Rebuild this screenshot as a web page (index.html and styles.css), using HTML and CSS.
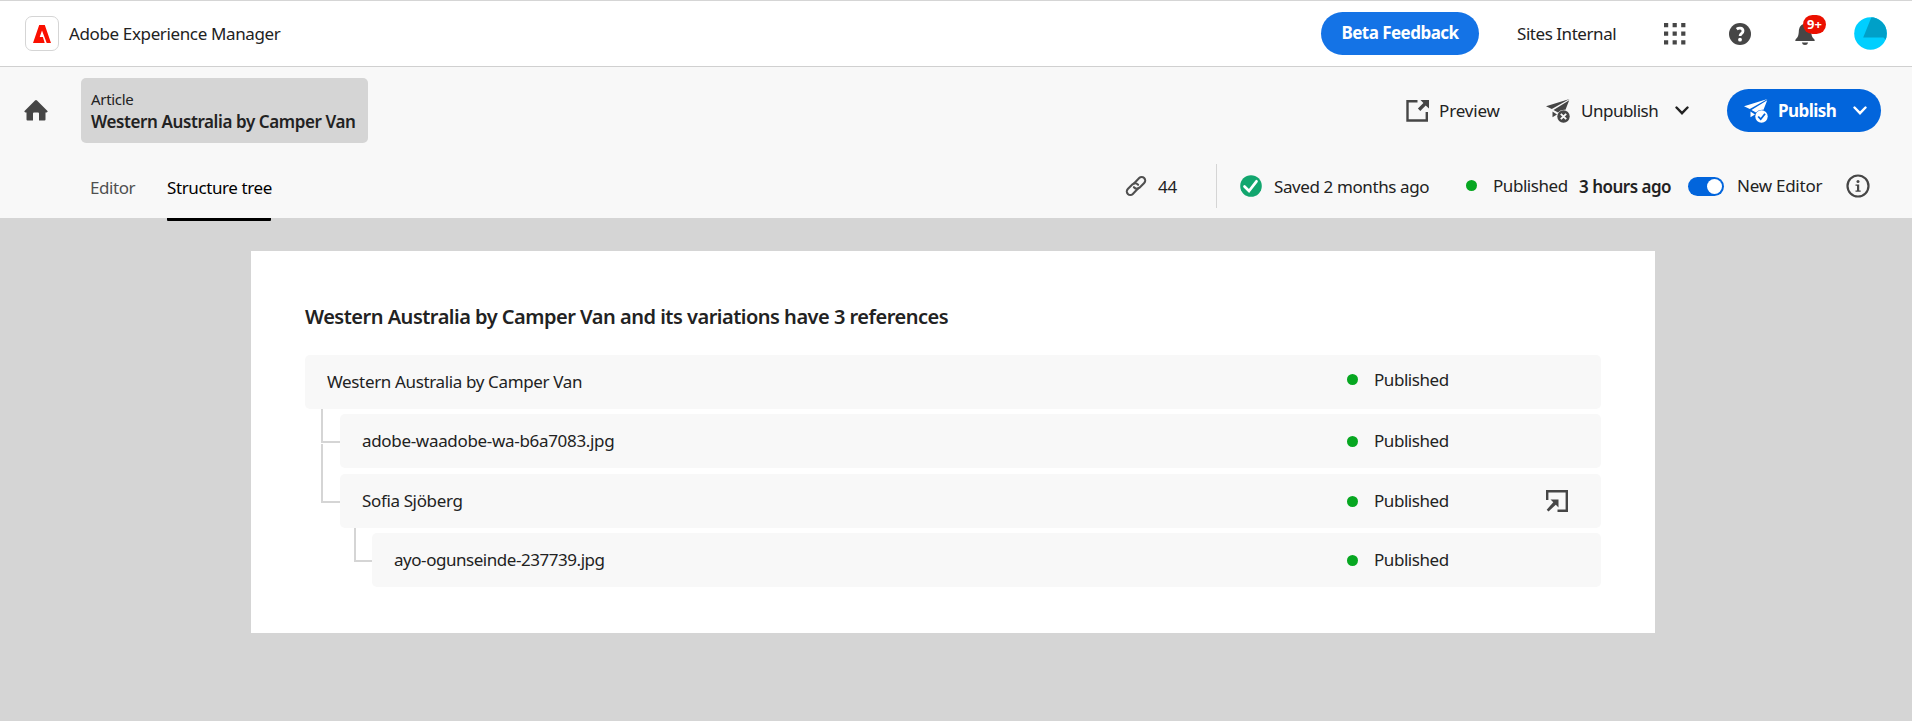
FILE: index.html
```html
<!DOCTYPE html>
<html lang="en">
<head>
<meta charset="utf-8">
<title>Adobe Experience Manager</title>
<link rel="stylesheet" href="styles.css">
</head>
<body>
<header class="shell">
  <div class="logo"><svg width="18" height="18" viewBox="0 0 18 18"><path fill="#fa0f00" d="M6.200 0h5.600L18 18h-4.300L9 5.600 6.700 12h3.200l1.800 6H0z"/></svg></div>
  <span class="t brand">Adobe Experience Manager</span>
  <button class="feedback"><span class="t">Beta Feedback</span></button>
  <span class="t org">Sites Internal</span>
  <svg class="apps" width="22" height="22" viewBox="0 0 22 22" fill="#464646"><path d="M0 0h4.200v4.200h-4.200zM8.600 0h4.200v4.200h-4.200zM17.200 0h4.200v4.200h-4.200zM0 8.600h4.200v4.200h-4.200zM8.600 8.600h4.200v4.200h-4.200zM17.200 8.600h4.200v4.200h-4.200zM0 17.200h4.200v4.200h-4.200zM8.600 17.200h4.200v4.200h-4.200zM17.200 17.200h4.200v4.200h-4.200z"/></svg>
  <svg class="help" width="22" height="22" viewBox="0 0 22 22"><circle cx="11" cy="11" r="11" fill="#464646"/><path d="M7.700 6.200Q9.200 5 11.200 5.100Q14 5.300 14 7.900Q14 9.400 12.500 10.500Q11.200 11.500 11.100 13" fill="none" stroke="#fff" stroke-width="2.800"/><circle cx="11" cy="16.700" r="1.900" fill="#fff"/></svg>
  <div class="bell"><svg width="20" height="22" viewBox="0 0 20 22" fill="#464646"><path d="M10 1C5.800 1 4 4.500 3.800 8.500C3.600 13 2.500 14.500.8 16.200Q0 17 .4 18H19.600Q20 17 19.200 16.200C17.500 14.500 16.400 13 16.200 8.500C16 4.500 14.200 1 10 1zM6.800 19.500H13.200Q12.500 22 10 22Q7.500 22 6.800 19.500z"/></svg><span class="badge">9+</span></div>
  <svg class="avatar" width="33" height="33" viewBox="0 0 33 33"><defs><clipPath id="disc"><circle cx="16.500" cy="16.500" r="16.300"/></clipPath></defs><g clip-path="url(#disc)"><path fill="#00cfff" d="M0 0h33v33H0z"/><path fill="#00a0c8" d="M17.500 0H33V24L29.500 20.500H9.200z"/></g></svg>
</header>
<section class="bar">
  <div class="actions">
    <svg class="home" width="24" height="21" viewBox="0 0 24 21"><path fill="#464646" d="M11 .4Q12 -.3 13 .4L23.500 11Q24 12.300 22.500 12.500H21.500V19.500Q21.500 20.500 20.500 20.500H15V13.500Q15 12.500 14 12.500H10Q9 12.500 9 13.500V20.500H3.500Q2.500 20.500 2.500 19.500V12.500H1.500Q0 12.300 .5 11z"/></svg>
    <div class="crumb"><span class="t kind">Article</span><span class="t name">Western Australia by Camper Van</span></div>
    <svg class="open" width="23" height="22" viewBox="0 0 23 22"><path d="M11.500 1.200H1.500V20.500H20.800V12" fill="none" stroke="#464646" stroke-width="2.400"/><path d="M14.500 0H23V8.500L19.700 5.500L14.300 11L11.900 8.600L17.400 3.100z" fill="#464646"/></svg>
    <span class="t preview">Preview</span>
    <svg class="plane un" width="24" height="24" viewBox="0 0 24 24"><path fill="#464646" d="M0 7.300L23.500 0L5.800 10zM7.500 11L23.200 1.200L19.500 10.800Q14.500 10.200 12 13.500zM6.500 12.500L11 15.500L6.500 18.300z"/><circle cx="17.500" cy="17.500" r="6.200" fill="#464646"/><path d="M14.800 14.800L20.200 20.200M20.200 14.800L14.800 20.200" stroke="#f8f8f8" stroke-width="1.900"/></svg>
    <span class="t unpublish">Unpublish</span>
    <svg class="chev" width="14" height="10" viewBox="0 0 14 10"><path d="M1.500 1.500L7 7.200L12.500 1.500" fill="none" stroke="#222" stroke-width="2.400" stroke-linecap="round"/></svg>
    <button class="publish">
      <svg width="24" height="24" viewBox="0 0 24 24"><path fill="#fff" d="M0 7.300L23.500 0L5.800 10zM7.500 11L23.200 1.200L19.500 10.800Q14.500 10.200 12 13.500zM6.500 12.500L11 15.500L6.500 18.300z"/><circle cx="17.500" cy="17.500" r="6.200" fill="#fff"/><path d="M14.200 17.500L16.700 20.200L21 14.800" fill="none" stroke="#0265dc" stroke-width="1.800"/></svg>
      <span class="t">Publish</span>
      <svg class="chev" width="14" height="10" viewBox="0 0 14 10"><path d="M1.500 1.500L7 7.200L12.500 1.500" fill="none" stroke="#fff" stroke-width="2.400" stroke-linecap="round"/></svg>
    </button>
  </div>
  <div class="status">
    <span class="t tab">Editor</span>
    <span class="tab-on"><span class="t">Structure tree</span></span>
    <svg class="link" width="22" height="22" viewBox="0 0 22 22" fill="none" stroke="#505050" stroke-width="2.100" stroke-linecap="round"><path d="M9 8.500L14.200 3.100A3.500 3.500 0 0 1 19.200 8L14.500 12.700Q11.500 15 8.900 12.200"/><path d="M13 13.500L7.800 18.900A3.500 3.500 0 0 1 2.800 14L7.500 9.300Q10.500 7 13.100 9.800"/></svg>
    <span class="t count">44</span>
    <i class="rule"></i>
    <svg class="check" width="22" height="22" viewBox="0 0 22 22"><circle cx="11" cy="11" r="10.800" fill="#12a66e"/><path d="M4.500 11.500L9 16L16.500 6.300" fill="none" stroke="#fff" stroke-width="2.700" stroke-linecap="round"/></svg>
    <span class="t saved">Saved 2 months ago</span>
    <i class="dot"></i>
    <span class="t pub">Published</span>
    <span class="t hours">3 hours ago</span>
    <span class="switch"><i></i></span>
    <span class="t neweditor">New Editor</span>
    <svg class="info" width="24" height="24" viewBox="0 0 24 24"><circle cx="12" cy="12" r="10.500" fill="none" stroke="#464646" stroke-width="2.200"/><circle cx="12" cy="7.500" r="1.500" fill="#464646"/><path d="M9.500 10.500H13.200V16.500H14.700V17.700H9.500V16.500H11V11.700H9.500z" fill="#464646"/></svg>
  </div>
</section>
<main class="card">
  <h1><span class="t">Western Australia by Camper Van and its variations have 3 references</span></h1>
  <div class="line"><div class="row first"><span class="t title">Western Australia by Camper Van</span><i class="dot"></i><span class="t state">Published</span></div></div>
  <div class="line l2"><i class="branch"></i><div class="row"><span class="t title file">adobe-waadobe-wa-b6a7083.jpg</span><i class="dot"></i><span class="t state">Published</span></div></div>
  <div class="line l3"><i class="branch tall"></i><div class="row"><span class="t title">Sofia Sjöberg</span><i class="dot"></i><span class="t state">Published</span><svg class="enter" width="22" height="22" viewBox="0 0 22 22"><path d="M1.200 10V1.200H20.800V20.800H11.500" fill="none" stroke="#464646" stroke-width="2.400"/><path d="M4.500 9.500H12.500V17.500L9.800 14.800L2.500 21.500L.7 19.700L7.300 12.300z" fill="#464646"/></svg></div></div>
  <div class="line l4"><i class="branch"></i><div class="row"><span class="t title author">ayo-ogunseinde-237739.jpg</span><i class="dot"></i><span class="t state">Published</span></div></div>
</main>
</body>
</html>
```
FILE: styles.css
```css
* { box-sizing: border-box; }
body { margin: 0; height: 721px; overflow: hidden; background: #d5d5d5; color: #222; font: 17px/24px "Noto Sans", "Open Sans", sans-serif; }
svg, i { display: block; flex: none; }
button { border: 0; padding: 0; font: inherit; color: #fff; display: flex; align-items: center; flex: none; }
.t { display: block; white-space: nowrap; flex: none; letter-spacing: -.45px; }

.shell { height: 67px; display: flex; align-items: center; background: #fff; border-top: 1px solid #d5d5d5; border-bottom: 1px solid #d0d0d0; padding: 0 25px; }
.logo { width: 34px; height: 35px; display: grid; place-items: center; border: 1px solid #d5d5d5; border-radius: 7px; }
.brand { width: 211px; margin-left: 10px; letter-spacing: -.37px; }
.feedback { width: 158px; height: 43px; margin-left: auto; justify-content: center; border-radius: 22px; background: #1473e6; font-weight: 700; }
.feedback .t { letter-spacing: -.53px; margin-top: -1px; }
.org { width: 99px; margin-left: 38px; }
.apps { margin-left: 48px; }
.help { margin-left: 43px; }
.bell { position: relative; margin-left: 44px; }
.badge { position: absolute; left: 8px; top: -8px; width: 23px; height: 19px; border-radius: 10px; background: #eb1000; color: #fff; font: 700 13px/19px "Noto Sans", sans-serif; text-align: center; }
.avatar { margin-left: 39px; }

.bar { height: 151px; background: #f8f8f8; }
.actions { height: 87px; display: flex; align-items: center; padding: 0 31px 0 24px; }
.crumb { width: 287px; height: 65px; margin-left: 33px; padding: 11px 10px; border-radius: 5px; background: #d5d5d5; }
.kind { font-size: 15px; line-height: 21px; letter-spacing: -.3px; }
.name { font-weight: 600; letter-spacing: -.4px; }
.open { margin-left: auto; }
.preview { width: 61px; margin-left: 10px; letter-spacing: -.15px; }
.un { margin-left: 46px; }
.unpublish { width: 77px; margin-left: 11px; letter-spacing: -.5px; }
.chev { margin-left: 17px; }
.publish { width: 154px; height: 43px; margin-left: 38px; padding-left: 17px; border-radius: 22px; background: #0265dc; font-weight: 700; }
.publish .t { width: 58px; margin-left: 10px; letter-spacing: -.56px; }

.status { height: 64px; display: flex; align-items: center; padding: 0 42px 0 90px; }
.tab { width: 45px; margin-top: 3px; color: #505050; }
.tab-on { width: 104px; height: 67px; margin: 3px 0 0 32px; padding-top: 22px; border-bottom: 3px solid #000; border-radius: 1px; color: #000; }
.tab-on .t { letter-spacing: -.4px; }
.link { margin-left: auto; }
.count { margin: 1px 0 0 11px; width: 19px; letter-spacing: -.2px; }
.rule { width: 1px; height: 44px; margin-left: 39px; background: #d5d5d5; }
.check { margin-left: 23px; }
.saved { width: 155px; margin: 1px 0 0 12px; letter-spacing: -.4px; }
.dot { width: 11px; height: 11px; border-radius: 50%; background: #07a721; }
.status .dot { margin: -1px 0 0 37px; }
.pub { width: 74px; margin: -1px 0 0 16px; }
.hours { width: 92px; margin: 1px 0 0 12px; font-weight: 600; letter-spacing: -.5px; }
.switch { width: 36px; height: 19px; margin-left: 17px; border-radius: 10px; padding: 2px; background: #0265dc; }
.switch i { width: 15px; height: 15px; margin-left: 17px; border-radius: 50%; background: #fff; }
.neweditor { width: 85px; margin: -1px 0 0 13px; letter-spacing: -.25px; }
.info { margin-left: 24px; }

.card { width: 1404px; height: 382px; margin: 33px 0 0 251px; padding: 52px 54px 0 54px; background: #fff; }
h1 { margin: 0 0 24px; height: 28px; font-size: 20px; line-height: 28px; font-weight: 600; }
h1 .t { letter-spacing: -.5px; }
.line { display: flex; align-items: flex-start; height: 54px; }
.l2, .l4 { margin-top: 5px; }
.l3 { margin-top: 6px; }
.l2, .l3 { padding-left: 16px; }
.l4 { padding-left: 49px; }
.branch { width: 19px; height: 34px; margin-top: -5px; border: solid #d5d5d5; border-width: 0 0 2px 2px; }
.l4 .branch { width: 18px; }
.tall { height: 59px; margin-top: -30px; }
.row { flex: 1; height: 54px; display: flex; align-items: center; padding: 0 33px 0 22px; border-radius: 5px; background: #f8f8f8; }
.title { flex: 1; letter-spacing: -.36px; }
.file { letter-spacing: -.32px; }
.author { letter-spacing: -.46px; }
.state { width: 75px; margin: 0 119px 0 16px; }
.first .dot, .first .state { margin-bottom: 5px; }
.enter { margin-left: -22px; }
```
